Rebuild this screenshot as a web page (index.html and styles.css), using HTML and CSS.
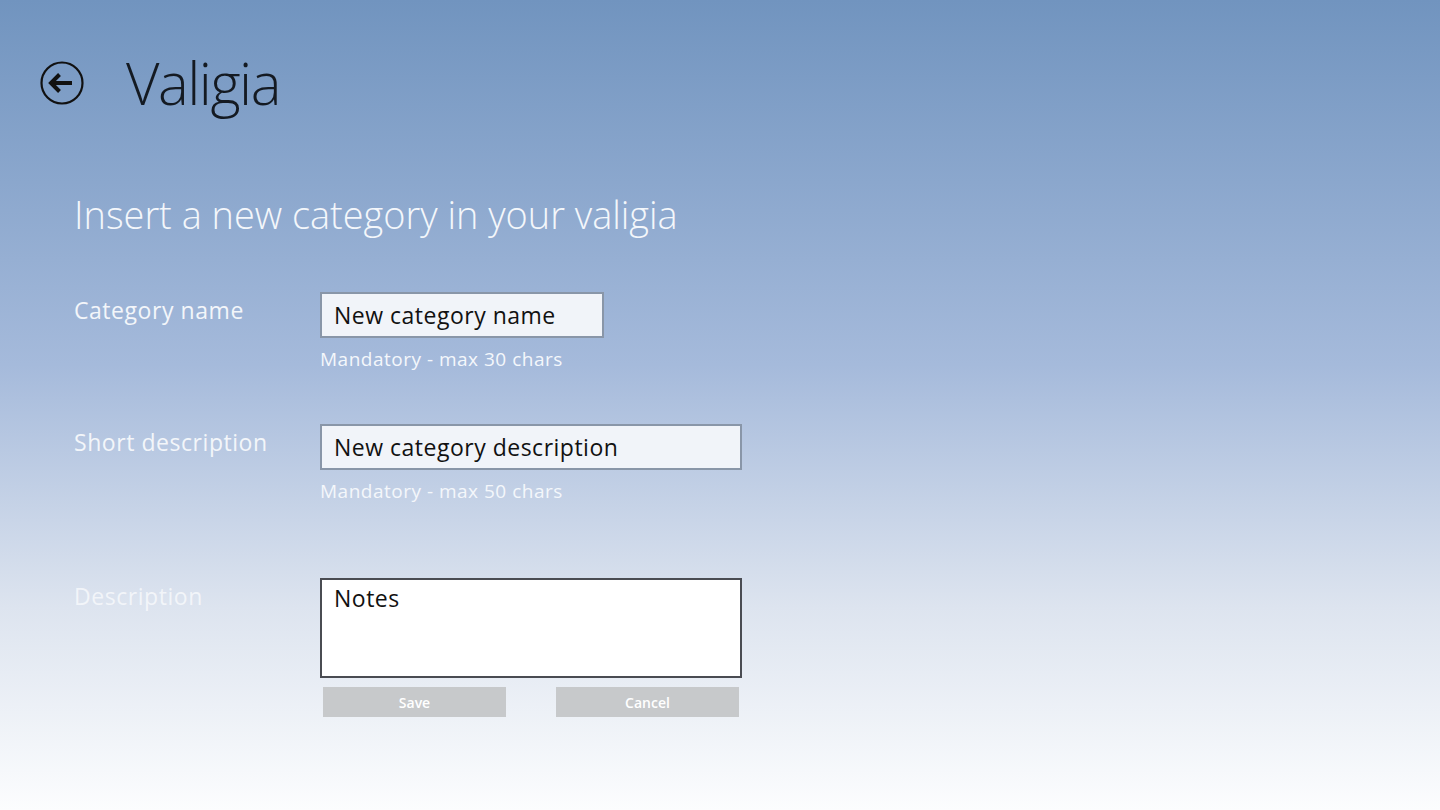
FILE: index.html
```html
<!DOCTYPE html>
<html lang="en">
<head>
<meta charset="utf-8">
<title>Valigia</title>
<link rel="stylesheet" href="styles.css">
</head>
<body>
<div class="page">
  <header class="header">
    <button class="back" aria-label="Back">
      <svg width="46" height="46" viewBox="0 0 46 46">
        <circle cx="23" cy="23" r="20.5" fill="none" stroke="#111" stroke-width="2.2"/>
        <path d="M13 23 H33" stroke="#111" stroke-width="4" fill="none"/>
        <path d="M20.5 14.5 L12 23 L20.5 31.5" stroke="#111" stroke-width="4" fill="none" stroke-linejoin="miter"/>
      </svg>
    </button>
    <h1 class="title">Valigia</h1>
  </header>

  <h2 class="subtitle">Insert a new category in your valigia</h2>

  <form class="form">
    <div class="row">
      <label class="label">Category name</label>
      <div class="field">
        <div class="input input-short">New category name</div>
        <div class="hint">Mandatory - max 30 chars</div>
      </div>
    </div>
    <div class="row row-second">
      <label class="label">Short description</label>
      <div class="field">
        <div class="input input-long">New category description</div>
        <div class="hint">Mandatory - max 50 chars</div>
      </div>
    </div>
    <div class="row row-third">
      <label class="label label-dim">Description</label>
      <div class="field">
        <div class="textarea">Notes</div>
        <div class="actions">
          <button type="button" class="btn">Save</button>
          <button type="button" class="btn">Cancel</button>
        </div>
      </div>
    </div>
  </form>
</div>
</body>
</html>
```

FILE: styles.css
```css
html, body {
  margin: 0;
  padding: 0;
  height: 100%;
}

body {
  font-family: "Open Sans", "Noto Sans", sans-serif;
  background: linear-gradient(to bottom, #7194bf 0%, #a5badb 45%, #dde4ef 75%, #fcfdfe 100%);
  overflow: hidden;
}

.page {
  width: 1440px;
  height: 810px;
}

.header {
  display: flex;
  align-items: center;
  padding: 57px 0 0 39px;
  height: 52px;
}

.back {
  width: 46px;
  height: 46px;
  padding: 0;
  border: none;
  background: none;
  display: flex;
}

.title {
  margin: 0 0 0 41px;
  font-weight: 300;
  font-size: 58px;
  line-height: 52px;
  color: #141a22;
  letter-spacing: -1.5px;
}

.subtitle {
  margin: 83px 0 0 74px;
  font-weight: 300;
  font-size: 37.9px;
  line-height: 44px;
  color: #f4f7fb;
  letter-spacing: 0;
}

.form {
  margin: 56px 0 0 74px;
  display: flex;
  flex-direction: column;
}

.row {
  display: grid;
  grid-template-columns: 246px auto;
}

.row-second {
  margin-top: 52px;
}

.row-third {
  margin-top: 74px;
}

.label {
  font-size: 23px;
  line-height: 36px;
  color: #f3f6fa;
  letter-spacing: 0.55px;
}

.label-dim {
  color: rgba(255, 255, 255, 0.66);
}

.field {
  display: flex;
  flex-direction: column;
}

.input {
  box-sizing: border-box;
  height: 46px;
  border: 2px solid #8996a8;
  background: #f1f4f9;
  color: #111;
  font-size: 23px;
  line-height: 42px;
  padding-left: 12px;
  letter-spacing: 0.5px;
}

.input-short {
  width: 284px;
}

.input-long {
  width: 422px;
}

.hint {
  margin-top: 8px;
  font-size: 19px;
  line-height: 26px;
  color: #f4f7fb;
  letter-spacing: 0.5px;
}

.textarea {
  box-sizing: border-box;
  width: 422px;
  height: 100px;
  border: 2px solid #4a4c52;
  background: #fff;
  color: #111;
  font-size: 23px;
  line-height: 36px;
  padding: 0 0 0 12px;
  letter-spacing: 0.5px;
}

.actions {
  display: flex;
  gap: 50px;
  margin: 9px 0 0 3px;
}

.btn {
  width: 183px;
  height: 30px;
  border: none;
  background: #c7c9cb;
  color: #fff;
  font-family: "Open Sans", "Noto Sans", sans-serif;
  font-weight: 600;
  font-size: 14px;
  padding: 0;
}
```
